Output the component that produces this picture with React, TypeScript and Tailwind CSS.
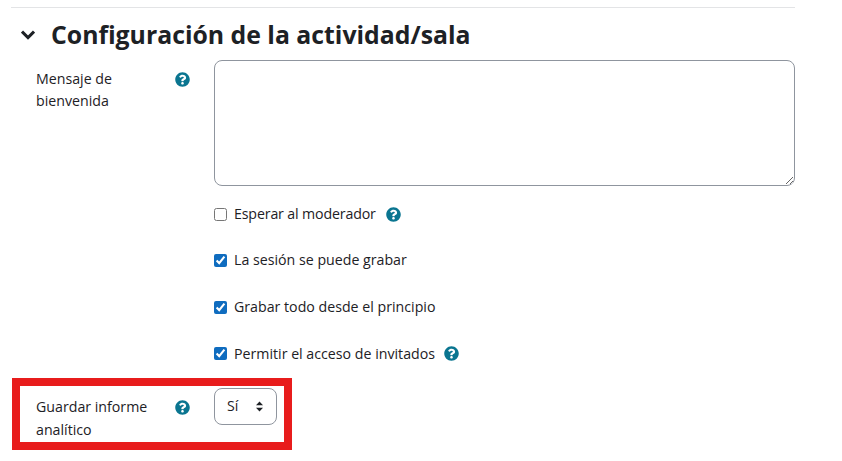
import { FaQuestionCircle } from "react-icons/fa";

function Help() {
  return <FaQuestionCircle className="w-[15px] h-[15px] text-[#0a7590] shrink-0" />;
}

function CheckRow({ label, checked, help, labelClass }: { label: string; checked?: boolean; help?: boolean; labelClass?: string }) {
  return (
    <label className="flex items-center h-[23px]">
      <input type="checkbox" defaultChecked={checked} className="w-[13px] h-[13px] m-0 accent-[#0f6cbf]" />
      <span className={labelClass ?? "ml-[7px] mr-[9px]"}>{label}</span>
      {help && <Help />}
    </label>
  );
}

export default function App() {
  return (
    <div className="w-[842px] h-[461px] overflow-hidden bg-white text-[#1d2125] text-[14.2px] leading-[22.6px] font-['Open_Sans','Noto_Sans',sans-serif] pt-[7px]">
      <div className="ml-[11px] w-[784px] h-px bg-[#e3e4e6]" />

      <div className="flex items-center ml-[21px] mt-[10px] h-[32px]">
        <svg viewBox="0 0 14 10" className="w-[14px] h-[10px] text-[#1d2125] mt-[2px]" fill="none" stroke="currentColor" strokeWidth="3">
          <path d="M1 1.6 7 7.6l6-6" />
        </svg>
        <h2 className="ml-[16px] text-[24.8px] leading-[32px] font-bold">Configuración de la actividad/sala</h2>
      </div>

      <div className="flex mt-[10px] ml-[36px]">
        <div className="w-[130px] pt-[8px] leading-[22.4px]">Mensaje de bienvenida</div>
        <div className="w-[32px] pl-[9px] pt-[12px]"><Help /></div>
        <div className="ml-[16px] flex flex-col">
          <textarea className="block w-[581px] h-[126px] border border-[#8f959e] rounded-[8px] outline-none" />
          <div className="mt-[16.5px] flex flex-col gap-[23.67px]">
            <CheckRow label="Esperar al moderador" help labelClass="ml-[7px] mr-[10px] tracking-[-0.01em]" />
            <CheckRow label="La sesión se puede grabar" checked />
            <CheckRow label="Grabar todo desde el principio" checked />
            <CheckRow label="Permitir el acceso de invitados" checked help />
          </div>
        </div>
      </div>

      <div className="flex ml-[12px] mt-[12.5px] w-[280px] h-[72px] border-[8px] border-[#e81c1c]">
        <div className="w-[130px] ml-[16px] pt-[10px] shrink-0">Guardar informe analítico</div>
        <div className="w-[32px] pl-[9px] pt-[14px] shrink-0"><Help /></div>
        <div className="ml-[16px] mt-[2px] w-[63px] h-[37px] border border-[#8f959e] rounded-[8px] flex items-center justify-between pl-[12px] pr-[12px]">
          <span>Sí</span>
          <svg viewBox="0 0 10 14" className="w-[9px] h-[11px] text-[#1d2125]" fill="currentColor">
            <path d="M5 0.5 9.5 5.5H0.5ZM5 13.5 0.5 8.5H9.5Z" />
          </svg>
        </div>
      </div>
    </div>
  );
}
